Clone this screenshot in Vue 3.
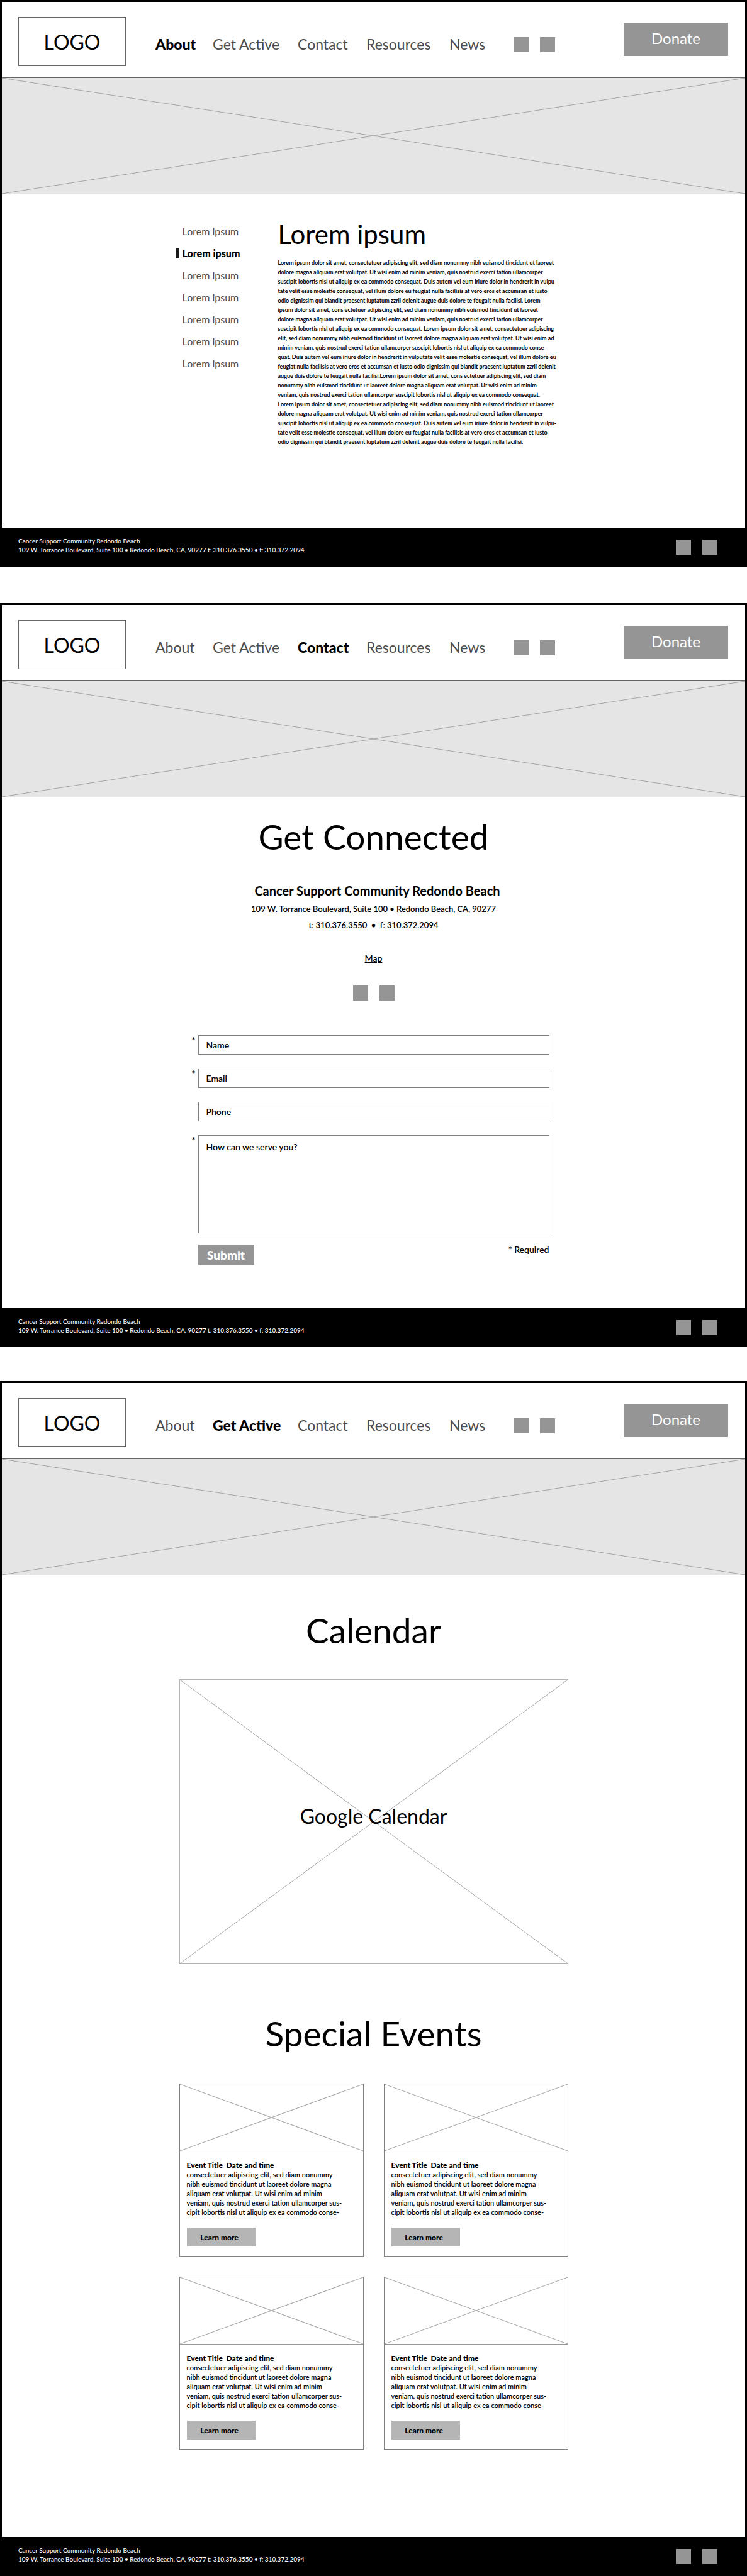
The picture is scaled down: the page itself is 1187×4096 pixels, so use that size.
<script setup>
const navItems = ['About', 'Get Active', 'Contact', 'Resources', 'News']

const screens = [
  { id: 'about', active: 'About' },
  { id: 'contact', active: 'Contact' },
  { id: 'events', active: 'Get Active' },
]

const sideLinks = Array.from({ length: 7 }, (_, i) => ({ id: i, current: i === 1 }))

const articleLines = [
  'Lorem ipsum dolor sit amet, consectetuer adipiscing elit, sed diam nonummy nibh euismod tincidunt ut laoreet',
  'dolore magna aliquam erat volutpat. Ut wisi enim ad minim veniam, quis nostrud exerci tation ullamcorper',
  'suscipit lobortis nisl ut aliquip ex ea commodo consequat. Duis autem vel eum iriure dolor in hendrerit in vulpu-',
  'tate velit esse molestie consequat, vel illum dolore eu feugiat nulla facilisis at vero eros et accumsan et iusto',
  'odio dignissim qui blandit praesent luptatum zzril delenit augue duis dolore te feugait nulla facilisi. Lorem',
  'ipsum dolor sit amet, cons ectetuer adipiscing elit, sed diam nonummy nibh euismod tincidunt ut laoreet',
  'dolore magna aliquam erat volutpat. Ut wisi enim ad minim veniam, quis nostrud exerci tation ullamcorper',
  'suscipit lobortis nisl ut aliquip ex ea commodo consequat. Lorem ipsum dolor sit amet, consectetuer adipiscing',
  'elit, sed diam nonummy nibh euismod tincidunt ut laoreet dolore magna aliquam erat volutpat. Ut wisi enim ad',
  'minim veniam, quis nostrud exerci tation ullamcorper suscipit lobortis nisl ut aliquip ex ea commodo conse-',
  'quat. Duis autem vel eum iriure dolor in hendrerit in vulputate velit esse molestie consequat, vel illum dolore eu',
  'feugiat nulla facilisis at vero eros et accumsan et iusto odio dignissim qui blandit praesent luptatum zzril delenit',
  'augue duis dolore te feugait nulla facilisi.Lorem ipsum dolor sit amet, cons ectetuer adipiscing elit, sed diam',
  'nonummy nibh euismod tincidunt ut laoreet dolore magna aliquam erat volutpat. Ut wisi enim ad minim',
  'veniam, quis nostrud exerci tation ullamcorper suscipit lobortis nisl ut aliquip ex ea commodo consequat.',
  'Lorem ipsum dolor sit amet, consectetuer adipiscing elit, sed diam nonummy nibh euismod tincidunt ut laoreet',
  'dolore magna aliquam erat volutpat. Ut wisi enim ad minim veniam, quis nostrud exerci tation ullamcorper',
  'suscipit lobortis nisl ut aliquip ex ea commodo consequat. Duis autem vel eum iriure dolor in hendrerit in vulpu-',
  'tate velit esse molestie consequat, vel illum dolore eu feugiat nulla facilisis at vero eros et accumsan et iusto',
  'odio dignissim qui blandit praesent luptatum zzril delenit augue duis dolore te feugait nulla facilisi.',
]

const eventLines = [
  'consectetuer adipiscing elit, sed diam nonummy',
  'nibh euismod tincidunt ut laoreet dolore magna',
  'aliquam erat volutpat. Ut wisi enim ad minim',
  'veniam, quis nostrud exerci tation ullamcorper sus-',
  'cipit lobortis nisl ut aliquip ex ea commodo conse-',
]

const fields = [
  { id: 'name', label: 'Name', type: 'text', required: true },
  { id: 'email', label: 'Email', type: 'email', required: true },
  { id: 'phone', label: 'Phone', type: 'tel', required: false },
]
</script>

<template>
  <div class="board">
    <section v-for="screen in screens" :key="screen.id" class="screen" :class="`screen--${screen.id}`">
      <header class="header">
        <a href="#" class="logo">LOGO</a>
        <nav class="nav">
          <a
            v-for="item in navItems"
            :key="item"
            href="#"
            class="nav__link"
            :class="{ 'nav__link--active': item === screen.active }"
          >{{ item }}</a>
        </nav>
        <div class="social social--header">
          <a href="#" class="social__icon" aria-label="Facebook"></a>
          <a href="#" class="social__icon" aria-label="Twitter"></a>
        </div>
        <button type="button" class="donate">Donate</button>
      </header>

      <div class="hero">
        <svg class="cross" viewBox="0 0 100 100" preserveAspectRatio="none" aria-hidden="true">
          <path d="M0 0 100 100M0 100 100 0" />
        </svg>
      </div>

      <main v-if="screen.id === 'about'" class="about">
        <ul class="side">
          <li v-for="link in sideLinks" :key="link.id">
            <a href="#" class="side__link" :class="{ 'side__link--current': link.current }">Lorem ipsum</a>
          </li>
        </ul>
        <article class="article">
          <h1 class="article__title">Lorem ipsum</h1>
          <p class="article__text">
            <template v-for="(line, i) in articleLines" :key="i">{{ line }}<br></template>
          </p>
        </article>
      </main>

      <main v-else-if="screen.id === 'contact'" class="contact">
        <h1 class="title">Get Connected</h1>
        <h2 class="contact__name">Cancer Support Community Redondo Beach</h2>
        <address class="contact__address">
          109 W. Torrance Boulevard, Suite 100 • Redondo Beach, CA, 90277<br>
          t: 310.376.3550 &nbsp;•&nbsp; f: 310.372.2094
        </address>
        <a href="#" class="contact__map">Map</a>
        <div class="social">
          <a href="#" class="social__icon" aria-label="Facebook"></a>
          <a href="#" class="social__icon" aria-label="Twitter"></a>
        </div>
        <form class="form" @submit.prevent>
          <div v-for="field in fields" :key="field.id" class="field">
            <span v-if="field.required" class="field__star">*</span>
            <label class="field__label" :for="field.id">{{ field.label }}</label>
            <input :id="field.id" class="field__input" :type="field.type" :required="field.required">
          </div>
          <div class="field">
            <span class="field__star">*</span>
            <label class="field__label field__label--area" for="message">How can we serve you?</label>
            <textarea id="message" class="field__input field__input--area" required></textarea>
          </div>
          <div class="form__end">
            <button type="submit" class="submit">Submit</button>
            <span class="form__note">* Required</span>
          </div>
        </form>
      </main>

      <main v-else class="events">
        <h1 class="title">Calendar</h1>
        <div class="calendar">
          <svg class="cross" viewBox="0 0 100 100" preserveAspectRatio="none" aria-hidden="true">
            <path d="M0 0 100 100M0 100 100 0" />
          </svg>
          <span class="calendar__label">Google Calendar</span>
        </div>
        <h1 class="title title--second">Special Events</h1>
        <div class="cards">
          <article v-for="n in 4" :key="n" class="card">
            <div class="card__image">
              <svg class="cross" viewBox="0 0 100 100" preserveAspectRatio="none" aria-hidden="true">
                <path d="M0 0 100 100M0 100 100 0" />
              </svg>
            </div>
            <div class="card__body">
              <h2 class="card__title">Event Title &nbsp;Date and time</h2>
              <p class="card__text">
                <template v-for="(line, i) in eventLines" :key="i">{{ line }}<br></template>
              </p>
              <button type="button" class="card__more">Learn more</button>
            </div>
          </article>
        </div>
      </main>

      <footer class="footer">
        <p class="footer__text">
          Cancer Support Community Redondo Beach<br>
          109 W. Torrance Boulevard, Suite 100 • Redondo Beach, CA, 90277 t: 310.376.3550 • f: 310.372.2094
        </p>
        <div class="social">
          <a href="#" class="social__icon" aria-label="Facebook"></a>
          <a href="#" class="social__icon" aria-label="Twitter"></a>
        </div>
      </footer>
    </section>
  </div>
</template>

<style>
body {
  margin: 0;
  background: #fff;
}
</style>

<style scoped>
.board {
  font-family: Lato, 'Noto Sans', sans-serif;
  color: #000;
}

.board *,
.board *::before {
  box-sizing: border-box;
}

h1,
h2,
p,
ul {
  margin: 0;
  padding: 0;
  list-style: none;
}

a {
  color: inherit;
  text-decoration: none;
}

button {
  border: 0;
  padding: 0;
  font-family: inherit;
  cursor: pointer;
}

.screen {
  border: 3px solid #000;
}

.screen--contact {
  margin-top: 58px;
}

.screen--events {
  margin-top: 54px;
}

/* Header */
.header {
  display: flex;
  align-items: flex-start;
  padding: 24px 27px 18px 26px;
  border-bottom: 1px solid #666;
}

.logo {
  display: flex;
  align-items: center;
  justify-content: center;
  width: 171px;
  height: 78px;
  border: 1px solid #666;
  font-size: 32px;
}

.nav {
  display: grid;
  grid-template-columns: 91px 135px 109px 132px 102px;
  margin: 29px 0 0 47px;
  font-size: 23px;
  line-height: 28px;
  color: #4d4d4d;
  white-space: nowrap;
}

.nav__link--active {
  font-weight: 900;
  color: #000;
}

.social {
  display: flex;
  gap: 18px;
}

.social--header {
  margin-top: 32px;
}

.social__icon {
  width: 24px;
  height: 24px;
  background: #959595;
}

.donate {
  width: 166px;
  height: 53px;
  margin: 9px 0 0 auto;
  padding-bottom: 4px;
  background: #959595;
  color: #fff;
  font-size: 24px;
}

.hero {
  position: relative;
  height: 185px;
  background: #e5e5e5;
  border-bottom: 1px solid #b3b3b3;
}

.cross {
  position: absolute;
  inset: 0;
  display: block;
  width: 100%;
  height: 100%;
}

.cross path {
  fill: none;
  stroke: #a3a3a3;
  stroke-width: 1px;
  vector-effect: non-scaling-stroke;
}

/* About */
.about {
  display: grid;
  grid-template-columns: 152px 1fr;
  gap: 10px;
  width: 628px;
  margin: 0 auto;
  padding: 39px 0 129px;
}

.side {
  padding-top: 2px;
  font-size: 16px;
  line-height: 35px;
  color: #4d4d4d;
}

.side__link {
  display: flex;
  align-items: center;
  gap: 5px;
}

.side__link::before {
  content: '';
  width: 5px;
  height: 17px;
}

.side__link--current {
  font-weight: 900;
  color: #000;
}

.side__link--current::before {
  background: #1a1a1a;
}

.article__title {
  margin-bottom: 14px;
  font-size: 42px;
  font-weight: 400;
  line-height: 48px;
}

.article__text {
  font-size: 9px;
  font-weight: 700;
  line-height: 15px;
  white-space: nowrap;
}

/* Contact */
.title {
  font-size: 55px;
  font-weight: 400;
  line-height: 66px;
  text-align: center;
}

.contact {
  display: flex;
  flex-direction: column;
  align-items: center;
  padding: 29px 0 69px;
}

.contact__name {
  margin-top: 40px;
  padding-left: 12px;
  font-size: 20px;
  font-weight: 700;
  line-height: 26px;
}

.contact__address {
  margin-top: 3px;
  font-size: 13px;
  font-style: normal;
  font-weight: 600;
  line-height: 26px;
  text-align: center;
}

.contact__map {
  margin: 27px 0 30px;
  font-size: 14px;
  font-weight: 600;
  line-height: 26px;
  text-decoration: underline;
}

.form {
  display: grid;
  gap: 22px;
  width: 558px;
  margin-top: 55px;
  font-size: 14px;
  font-weight: 600;
}

.field {
  position: relative;
  display: grid;
}

.field__star {
  position: absolute;
  right: 100%;
  top: 0;
  padding-right: 4px;
  line-height: 16px;
}

.field__label {
  position: absolute;
  left: 13px;
  top: 6px;
  line-height: 20px;
}

.field__label--area {
  top: 9px;
}

.field__input {
  width: 100%;
  height: 31px;
  margin: 0;
  padding: 0 13px;
  border: 1px solid #808080;
  border-radius: 0;
  background: transparent;
  font: inherit;
}

.field__input--area {
  height: 156px;
  padding: 32px 13px 8px;
  resize: none;
}

.form__end {
  display: flex;
  justify-content: space-between;
  align-items: flex-start;
  margin-top: -4px;
}

.submit {
  width: 89px;
  height: 32px;
  background: #959595;
  color: #fff;
  font-size: 19px;
  font-weight: 900;
}

.form__note {
  line-height: 16px;
}

/* Events */
.events {
  width: 618px;
  margin: 0 auto;
  padding: 54px 0 139px;
}

.calendar {
  position: relative;
  display: flex;
  align-items: center;
  justify-content: center;
  height: 453px;
  margin-top: 45px;
  padding-bottom: 18px;
  border: 1px solid #b3b3b3;
}

.calendar__label {
  position: relative;
  font-size: 32px;
}

.title--second {
  margin-top: 77px;
}

.cards {
  display: grid;
  grid-template-columns: 1fr 1fr;
  gap: 32px;
  margin-top: 47px;
}

.card {
  border: 1px solid #808080;
  border-top-color: #666;
}

.card__image {
  position: relative;
  height: 107px;
  border-bottom: 1px solid #999;
}

.card__body {
  padding: 14px 11px 15px;
  font-size: 11px;
  line-height: 15px;
  white-space: nowrap;
}

.card__title {
  font-size: 12px;
  font-weight: 900;
}

.card__text {
  font-weight: 600;
}

.card__more {
  display: block;
  width: 109px;
  height: 30px;
  margin-top: 17px;
  padding-right: 5px;
  background: #b5b5b5;
  color: #000;
  font-size: 12px;
  font-weight: 900;
}

/* Footer */
.footer {
  display: flex;
  justify-content: space-between;
  align-items: flex-start;
  padding: 14px 44px 16px 26px;
  background: #000;
  color: #fff;
}

.footer__text {
  font-size: 10px;
  font-weight: 500;
  line-height: 14px;
}

.footer .social {
  margin-top: 5px;
}
</style>
